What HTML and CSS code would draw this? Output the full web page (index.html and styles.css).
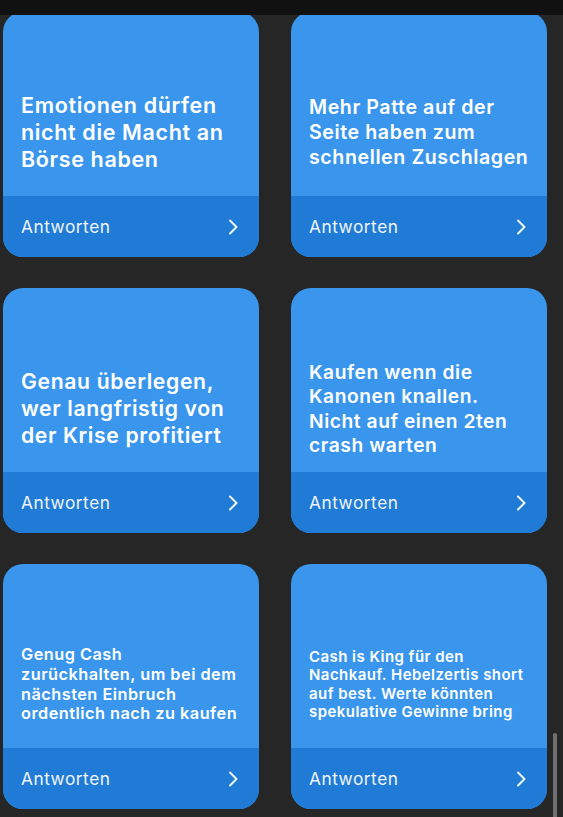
FILE: index.html
```html
<!DOCTYPE html>
<html lang="de">
<head>
<meta charset="utf-8">
<title>Antworten</title>
<link rel="stylesheet" href="styles.css">
</head>
<body>
<div class="topbar"></div>
<main class="grid">
  <section class="card">
    <div class="card-body"><p class="title t1">Emotionen dürfen<br>nicht die Macht an<br>Börse haben</p></div>
    <div class="card-foot"><span>Antworten</span><svg class="chev" viewBox="0 0 10 16"><path d="M2 1.5 L8.5 8 L2 14.5"/></svg></div>
  </section>
  <section class="card">
    <div class="card-body"><p class="title t2">Mehr Patte auf der<br>Seite haben zum<br>schnellen Zuschlagen</p></div>
    <div class="card-foot"><span>Antworten</span><svg class="chev" viewBox="0 0 10 16"><path d="M2 1.5 L8.5 8 L2 14.5"/></svg></div>
  </section>
  <section class="card">
    <div class="card-body"><p class="title t3">Genau überlegen,<br>wer langfristig von<br>der Krise profitiert</p></div>
    <div class="card-foot"><span>Antworten</span><svg class="chev" viewBox="0 0 10 16"><path d="M2 1.5 L8.5 8 L2 14.5"/></svg></div>
  </section>
  <section class="card">
    <div class="card-body"><p class="title t4">Kaufen wenn die<br>Kanonen knallen.<br>Nicht auf einen 2ten<br>crash warten</p></div>
    <div class="card-foot"><span>Antworten</span><svg class="chev" viewBox="0 0 10 16"><path d="M2 1.5 L8.5 8 L2 14.5"/></svg></div>
  </section>
  <section class="card">
    <div class="card-body"><p class="title t5">Genug Cash<br>zurückhalten, um bei dem<br>nächsten Einbruch<br>ordentlich nach zu kaufen</p></div>
    <div class="card-foot"><span>Antworten</span><svg class="chev" viewBox="0 0 10 16"><path d="M2 1.5 L8.5 8 L2 14.5"/></svg></div>
  </section>
  <section class="card">
    <div class="card-body"><p class="title t6">Cash is King für den<br>Nachkauf. Hebelzertis short<br>auf best. Werte könnten<br>spekulative Gewinne bring</p></div>
    <div class="card-foot"><span>Antworten</span><svg class="chev" viewBox="0 0 10 16"><path d="M2 1.5 L8.5 8 L2 14.5"/></svg></div>
  </section>
</main>
<div class="scrollbar"></div>
</body>
</html>
```
FILE: styles.css
```css
html, body {
  margin: 0;
  padding: 0;
}
body {
  background: #262626;
  width: 563px;
  height: 817px;
  overflow: hidden;
  font-family: Inter, "Noto Sans", sans-serif;
  color: #fff;
  position: relative;
}
.topbar {
  position: absolute;
  left: 0;
  top: 0;
  width: 563px;
  height: 15px;
  background: #111111;
  z-index: 2;
}
.grid {
  display: grid;
  grid-template-columns: 256px 256px;
  column-gap: 32px;
  row-gap: 31px;
  padding: 12px 0 0 3px;
}
.card {
  height: 245px;
  border-radius: 20px;
  overflow: hidden;
  display: flex;
  flex-direction: column;
  background: #3a96ec;
}
.card-body {
  flex: 1;
  display: flex;
  align-items: center;
  padding: 57px 4px 0 18px;
}
.title {
  margin: 0;
  font-weight: 600;
  letter-spacing: 0.03em;
  white-space: nowrap;
}
.t1 { font-size: 21.5px; line-height: 27px; }
.t3 { font-size: 21.2px; line-height: 27px; }
.t2 { font-size: 19.6px; line-height: 25px; }
.t4 { font-size: 19.2px; line-height: 24.5px; }
.t5 { font-size: 16.3px; line-height: 19.7px; }
.t6 { font-size: 15px; line-height: 18.3px; }
.card-foot {
  height: 61px;
  flex: none;
  background: #1f7bd6;
  display: flex;
  align-items: center;
  justify-content: space-between;
  padding: 0 21px 0 18px;
  font-size: 17.3px;
  letter-spacing: 0.03em;
  color: #eef4fc;
}
.chev {
  width: 10px;
  height: 16px;
  fill: none;
  stroke: #eef4fc;
  stroke-width: 2;
  stroke-linecap: round;
  stroke-linejoin: round;
}
.scrollbar {
  position: absolute;
  left: 553px;
  top: 733px;
  width: 4px;
  height: 90px;
  border-radius: 2px;
  background: #707070;
}
```
